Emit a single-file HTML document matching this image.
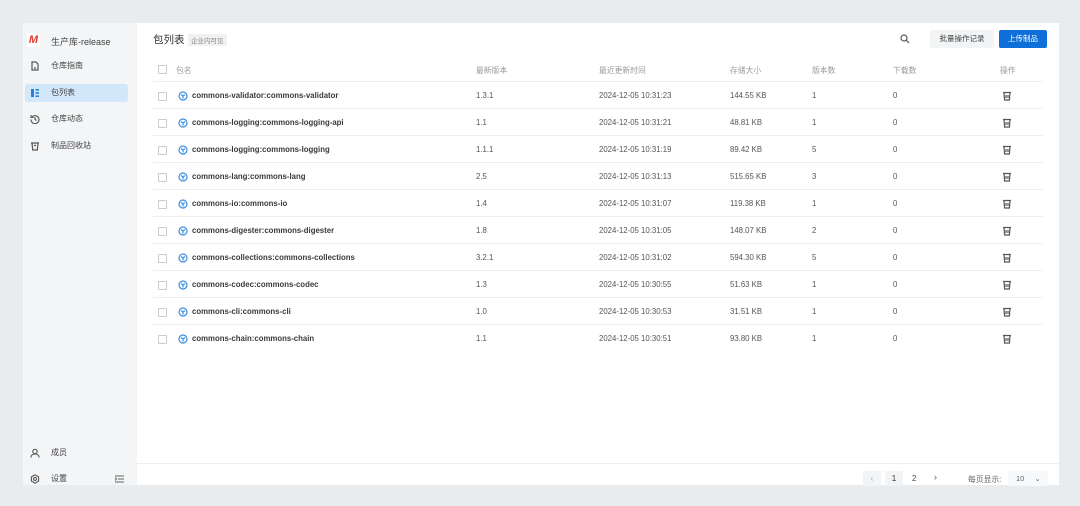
<!DOCTYPE html><html><head><meta charset="utf-8"><style>
*{margin:0;padding:0;box-sizing:border-box}
body{width:1080px;height:506px;background:#e8ecef;font-family:"Liberation Sans","Noto Sans CJK SC",sans-serif;position:relative;overflow:hidden;color:#333}
.panel{position:absolute;left:23px;top:23px;width:1036px;height:462px;background:#fff}
.side{position:absolute;left:0;top:0;width:114px;height:462px;background:#f3f5f7}
.abs{position:absolute}
.nav{position:absolute;left:2px;width:103px;height:18px;font-size:8px;color:#444;line-height:18px;padding-left:26px}
.nav.act{background:#d3e7fa;border-radius:3px}
.nav svg{position:absolute;left:5px;top:4px}
.t{position:absolute;font-size:7.8px;color:#555;white-space:nowrap}
.h{color:#999}
.cb{position:absolute;left:135px;width:9px;height:9px;border:1px solid #ccc;border-radius:1px}
.line{position:absolute;left:130px;width:890px;height:1px;background:#eee}
.pk{position:absolute;left:155px}
.nm{position:absolute;left:169px;font-size:7.8px;font-weight:bold;color:#3a3a3a;white-space:nowrap}
.tr{position:absolute;left:979px}
</style></head><body>
<div class="panel">
<div class="side">
<div class="abs" style="left:4px;top:10px;width:13px;height:14px;background:#fff;border-radius:2px;color:#e03b2e;font-weight:bold;font-style:italic;font-size:11px;text-align:center;line-height:14px">M</div>
<div class="abs" style="left:28px;top:12px;font-size:9px;color:#444">生产库-release</div>
<div class="nav" style="top:34px"><svg width="10" height="10" viewBox="0 0 10 10" fill="none" stroke="#555" stroke-width="1.2"><path d="M2 1h4l2 2v6H2z"/><path d="M4 7h2"/></svg>仓库指南</div>
<div class="nav act" style="top:61px"><svg width="10" height="10" viewBox="0 0 10 10" fill="#2d7fd6"><rect x="1" y="1" width="3" height="8"/><rect x="5.5" y="1" width="3.5" height="1.6"/><rect x="5.5" y="4.2" width="3.5" height="1.6"/><rect x="5.5" y="7.4" width="3.5" height="1.6"/></svg>包列表</div>
<div class="nav" style="top:87px"><svg width="10" height="10" viewBox="0 0 10 10" fill="none" stroke="#555" stroke-width="1.1"><path d="M2 3A4 4 0 1 1 1 5.5"/><path d="M1 1v2.5h2.5M5 3v2.5l1.5 1"/></svg>仓库动态</div>
<div class="nav" style="top:114px"><svg width="10" height="10" viewBox="0 0 10 10" fill="none" stroke="#555" stroke-width="1.2"><path d="M1 2h8M2 2l.7 7h4.6L8 2M4 4.5h2"/></svg>制品回收站</div>
<div class="nav" style="top:421px"><svg width="10" height="10" viewBox="0 0 10 10" fill="none" stroke="#555" stroke-width="1.1"><circle cx="5" cy="3.5" r="2.2"/><path d="M1 9.5c0-2.5 2-3.5 4-3.5s4 1 4 3.5"/></svg>成员</div>
<div class="nav" style="top:447px"><svg width="10" height="10" viewBox="0 0 10 10" fill="none" stroke="#555" stroke-width="1.1"><circle cx="5" cy="5" r="1.5"/><path d="M5 .8l3.6 2.1v4.2L5 9.2 1.4 7.1V2.9z"/></svg>设置</div>
<svg class="abs" style="left:92px;top:452px" width="9" height="8" viewBox="0 0 9 8" stroke="#666" stroke-width="1"><path d="M0 1h9M3 4h6M0 7h9M0 2.5l1.5 1.5L0 5.5" fill="none"/></svg>
</div>
<div class="abs" style="left:130px;top:9px;font-size:10.5px;color:#333">包列表</div>
<div class="abs" style="left:165px;top:11px;font-size:6.5px;color:#888;background:#f0f1f3;padding:1px 3px">企业内可见</div>
<svg class="abs" style="left:877px;top:11px" width="10" height="10" viewBox="0 0 10 10" fill="none" stroke="#555" stroke-width="1.2"><circle cx="4" cy="4" r="3"/><path d="M6.3 6.3L9 9"/></svg>
<div class="abs" style="left:907px;top:7px;width:64px;height:18px;background:#f2f4f6;font-size:7.5px;color:#444;text-align:center;line-height:18px;border-radius:2px">批量操作记录</div>
<div class="abs" style="left:976px;top:7px;width:48px;height:18px;background:#0f6fd8;font-size:7.5px;color:#fff;text-align:center;line-height:18px;border-radius:2px">上传制品</div>
<div class="cb" style="top:42px"></div>
<div class="t h" style="left:153px;top:42px">包名</div>
<div class="t h" style="left:453px;top:42px">最新版本</div>
<div class="t h" style="left:576px;top:42px">最近更新时间</div>
<div class="t h" style="left:707px;top:42px">存储大小</div>
<div class="t h" style="left:789px;top:42px">版本数</div>
<div class="t h" style="left:870px;top:42px">下载数</div>
<div class="t h" style="left:977px;top:42px">操作</div>
<div class="line" style="top:58px"></div>
<div id="rows"></div>
<div class="abs" style="left:114px;top:440px;width:922px;height:1px;background:#eee"></div>
<div class="abs" style="left:840px;top:448px;width:18px;height:15px;background:#f3f4f6;font-size:8px;color:#aaa;text-align:center;line-height:15px">‹</div>
<div class="abs" style="left:862px;top:448px;width:18px;height:15px;background:#f3f4f6;font-size:8px;color:#333;text-align:center;line-height:15px">1</div>
<div class="t" style="left:889px;top:451px;color:#444">2</div>
<div class="t" style="left:911px;top:449px;font-size:9px">›</div>
<div class="t" style="left:945px;top:451px;color:#666">每页显示:</div>
<div class="abs" style="left:985px;top:448px;width:40px;height:15px;background:#f8f9fa;font-size:7.5px;color:#666;line-height:15px;padding-left:8px">10 <span style="margin-left:8px">⌄</span></div>
</div>
<script>
var d=[["commons-validator:commons-validator","1.3.1","23","144.55 KB",1],["commons-logging:commons-logging-api","1.1","21","48.81 KB",1],["commons-logging:commons-logging","1.1.1","19","89.42 KB",5],["commons-lang:commons-lang","2.5","13","515.65 KB",3],["commons-io:commons-io","1.4","07","119.38 KB",1],["commons-digester:commons-digester","1.8","05","148.07 KB",2],["commons-collections:commons-collections","3.2.1","02","594.30 KB",5],["commons-codec:commons-codec","1.3","55","51.63 KB",1],["commons-cli:commons-cli","1.0","53","31.51 KB",1],["commons-chain:commons-chain","1.1","51","93.80 KB",1]];
var h="";d.forEach(function(r,i){var y=68+i*27;var m=i<7?"31":"30";
h+='<div class="cb" style="top:'+(y+1)+'px"></div><svg class="pk" style="top:'+y+'px" width="10" height="10" viewBox="0 0 10 10" fill="none" stroke="#3a8fe0" stroke-width="1.2"><circle cx="5" cy="5" r="4"/><path d="M3 3.5l2 1.5 2-1.5M5 5v2.5"/></svg><div class="nm" style="top:'+y+'px">'+r[0]+'</div>'
+'<div class="t" style="left:453px;top:'+y+'px">'+r[1]+'</div><div class="t" style="left:576px;top:'+y+'px">2024-12-05 10:'+m+':'+r[2]+'</div>'
+'<div class="t" style="left:707px;top:'+y+'px">'+r[3]+'</div><div class="t" style="left:789px;top:'+y+'px">'+r[4]+'</div><div class="t" style="left:870px;top:'+y+'px">0</div>'
+'<svg class="tr" style="top:'+y+'px" width="10" height="10" viewBox="0 0 10 10" fill="none" stroke="#555" stroke-width="1.2"><path d="M1 1.5h8M2 1.5l.6 7.5h4.8L8 1.5M4 4v3M6 4v3"/></svg>'
+(i<9?'<div class="line" style="top:'+(y+17)+'px"></div>':'');});
document.getElementById("rows").outerHTML=h;
</script>
</body></html>
